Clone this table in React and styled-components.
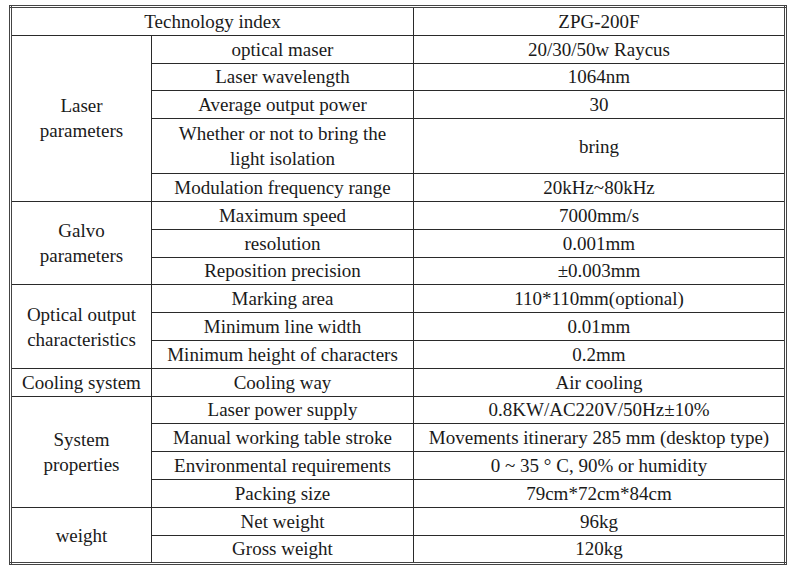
import styled, { createGlobalStyle } from "styled-components";

const Global = createGlobalStyle`
  html, body {
    margin: 0;
    padding: 0;
    background: #fff;
    font-family: "Liberation Serif", "Times New Roman", serif;
  }
`;

const Page = styled.div`
  padding: 5px 0 0 9px;
`;

const Table = styled.table`
  width: 778px;
  table-layout: fixed;
  border-collapse: collapse;
  border: 3px double #444;
`;

const Cell = styled.td`
  border: 1px solid #2a2a2a;
  height: ${(p) => (p.$tall ? 54 : 26.8)}px;
  padding: 0 2px;
  text-align: center;
  vertical-align: middle;
  font-family: "Liberation Serif", "Times New Roman", serif;
  font-size: 19px;
  line-height: 25px;
  color: #1a1a1a;
  white-space: nowrap;
`;

const rows = [
  {
    group: ["Laser", "parameters"],
    items: [
      ["optical maser", "20/30/50w Raycus"],
      ["Laser wavelength", "1064nm"],
      ["Average output power", "30"],
      [["Whether or not to bring the", "light isolation"], "bring"],
      ["Modulation frequency range", "20kHz~80kHz"],
    ],
  },
  {
    group: ["Galvo", "parameters"],
    items: [
      ["Maximum speed", "7000mm/s"],
      ["resolution", "0.001mm"],
      ["Reposition precision", "±0.003mm"],
    ],
  },
  {
    group: ["Optical output", "characteristics"],
    items: [
      ["Marking area", "110*110mm(optional)"],
      ["Minimum line width", "0.01mm"],
      ["Minimum height of characters", "0.2mm"],
    ],
  },
  {
    group: ["Cooling system"],
    items: [["Cooling way", "Air cooling"]],
  },
  {
    group: ["System", "properties"],
    items: [
      ["Laser power supply", "0.8KW/AC220V/50Hz±10%"],
      ["Manual working table stroke", "Movements itinerary 285 mm (desktop type)"],
      ["Environmental requirements", "0 ~ 35 ° C, 90% or humidity"],
      ["Packing size", "79cm*72cm*84cm"],
    ],
  },
  {
    group: ["weight"],
    items: [
      ["Net weight", "96kg"],
      ["Gross weight", "120kg"],
    ],
  },
];

function Lines({ text }) {
  const parts = Array.isArray(text) ? text : [text];
  return parts.map((t, i) => (
    <span key={i}>
      {i > 0 && <br />}
      {t}
    </span>
  ));
}

export default function App() {
  return (
    <Page>
      <Global />
      <Table>
        <colgroup>
          <col style={{ width: 141 }} />
          <col style={{ width: 262 }} />
          <col />
        </colgroup>
        <tbody>
          <tr>
            <Cell colSpan={2}>Technology index</Cell>
            <Cell>ZPG-200F</Cell>
          </tr>
          {rows.map((g) =>
            g.items.map(([name, value], i) => {
              const tall = Array.isArray(name);
              return (
                <tr key={g.group.join() + i}>
                  {i === 0 && (
                    <Cell rowSpan={g.items.length}>
                      <Lines text={g.group} />
                    </Cell>
                  )}
                  <Cell $tall={tall}>
                    <Lines text={name} />
                  </Cell>
                  <Cell $tall={tall}>{value}</Cell>
                </tr>
              );
            })
          )}
        </tbody>
      </Table>
    </Page>
  );
}
